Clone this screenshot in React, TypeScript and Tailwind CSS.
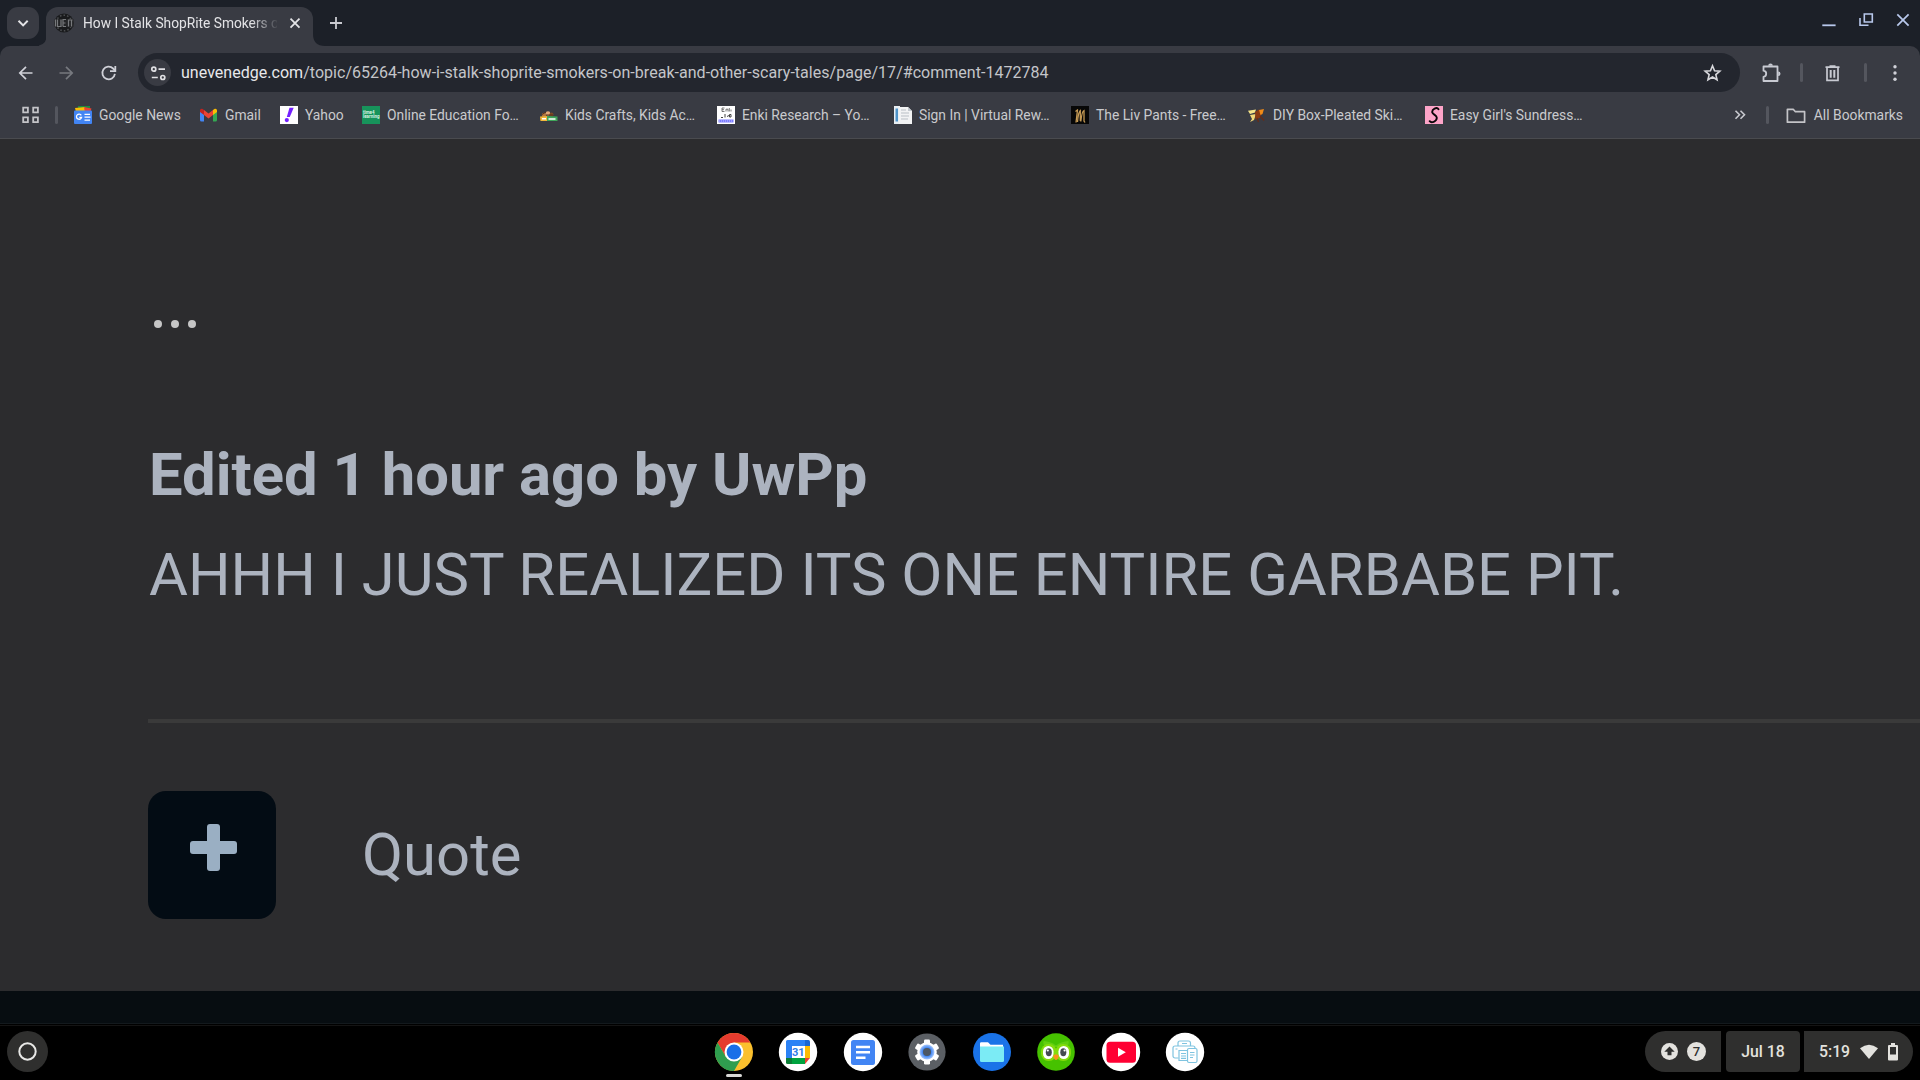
import React from "react";

const FONT = "font-['Roboto','Liberation_Sans',sans-serif]";

function ChevronDown() {
  return (
    <svg className="size-[32px]" viewBox="0 0 32 32" fill="none" stroke="#e3e3e6" strokeWidth="2">
      <path d="M11.5 13.8l4.6 4.6 4.6-4.6" />
    </svg>
  );
}

function TabFavicon() {
  return (
    <svg className="size-[20px] shrink-0" viewBox="0 0 20 20">
      <circle cx="10" cy="10" r="9.6" fill="#191a1c" />
      <circle cx="10" cy="10" r="7.8" fill="none" stroke="#4a4c4f" strokeWidth="1.6" strokeDasharray="1.6 2" />
      <path d="M0.500 6h19v8h-19z" fill="#242527" />
      <path d="M1.500 6.500v7M3.500 6.500v7h3.500v-7M9 13.500v-7h3M9 10h2.500M9 13.500h3M14.500 6.500v7M14 7h4.500M17.500 7v6.500" stroke="#77797c" strokeWidth="1.200" fill="none" />
    </svg>
  );
}

function TabStrip() {
  return (
    <div className="flex h-[46px] w-full bg-[#1c2028] pt-[7px]">
      <div className="ml-[7px] size-[32px] rounded-[11px] bg-[#393b43]">
        <ChevronDown />
      </div>
      <svg className="-mr-px mt-[27px] h-[12px] w-[8px]" viewBox="1 0 8 12">
        <path d="M9 0v12H-3Q9 12 9 0" fill="#393b43" />
      </svg>
      <div className="flex h-[39px] w-[267px] items-start rounded-t-[12px] bg-[#393b43] pl-[8px] pt-[6px]">
        <TabFavicon />
        <div className="ml-[9px] h-[20px] w-[194px] overflow-hidden whitespace-nowrap text-[13.75px] leading-[20px] text-[#e3e3e6] [mask-image:linear-gradient(to_right,black_168px,transparent_196px)]">
          How I Stalk ShopRite Smokers o
        </div>
        <svg className="ml-[8px] size-[20px]" viewBox="0 0 20 20" stroke="#e3e3e6" strokeWidth="1.8">
          <path d="M5.5 5.7l9 9M14.500 5.7l-9 9" />
        </svg>
      </div>
      <svg className="-ml-px mt-[27px] h-[12px] w-[14px]" viewBox="0 0 14 12">
        <path d="M0 0h1Q1 12 13 12H0z" fill="#393b43" />
      </svg>
      <svg className="mt-[6px] size-[20px]" viewBox="0 0 20 20" stroke="#c9cad0" strokeWidth="1.8">
        <path d="M10 4v12M4 10h12" />
      </svg>
      <div className="ml-auto mr-[7px] flex gap-[17px]">
        <svg className="size-[20px]" viewBox="0 0 20 20" fill="none" stroke="#b8c8ec" strokeWidth="1.8">
          <path d="M3.300 18.300h13.300" />
        </svg>
        <svg className="size-[20px]" viewBox="0 0 20 20" fill="none" stroke="#b8c8ec" strokeWidth="1.6">
          <path d="M8.300 7h8v8h-8z M4 11v7.200h8.500" />
        </svg>
        <svg className="size-[20px]" viewBox="0 0 20 20" fill="none" stroke="#b8c8ec" strokeWidth="1.7">
          <path d="M4.300 7.300l11.300 11.300M15.600 7.300L4.300 18.600" />
        </svg>
      </div>
    </div>
  );
}

function Toolbar() {
  return (
    <div className="flex h-[53px] items-center">
      <svg className="ml-[16px] size-[20px]" viewBox="0 0 20 20" fill="none" stroke="#d0d1d8" strokeWidth="1.7">
        <path d="M16.500 10H4M10 3.800L3.800 10l6.200 6.200" />
      </svg>
      <svg className="ml-[20px] size-[20px]" viewBox="0 0 20 20" fill="none" stroke="#77797f" strokeWidth="1.7">
        <path d="M3.500 10H16M10 3.800l6.200 6.200-6.200 6.200" />
      </svg>
      <svg className="ml-[22px] size-[20px]" viewBox="0 0 20 20" fill="none" stroke="#d0d1d8" strokeWidth="1.8">
        <path d="M16.900 10.900A6.300 6.300 0 1 1 15.100 5.500L17 7.400" />
        <path d="M17.300 2.900v5.200h-5.300" />
      </svg>
      <div className="ml-[20px] flex h-[39px] w-[1602px] items-center rounded-full bg-[#23262e] pl-[6px]">
        <div className="flex size-[27px] items-center justify-center rounded-full bg-[#393b43]">
          <svg className="size-[18px]" viewBox="0 0 18 18" fill="none" stroke="#e0e0e4" strokeWidth="1.7">
            <circle cx="4.800" cy="5.200" r="2" />
            <path d="M9.500 5.200h6.500M2.800 13.500h6" />
            <circle cx="13.800" cy="13.500" r="2" />
          </svg>
        </div>
        <div className="ml-[10px] whitespace-nowrap text-[16px] leading-[20px] tracking-[0.03px] text-[#c4c5c9]">
          <span className="text-[#e8e8eb]">unevenedge.com</span>/topic/65264-how-i-stalk-shoprite-smokers-on-break-and-other-scary-tales/page/17/#comment-1472784
        </div>
        <svg className="ml-auto mr-[18px] size-[20px]" viewBox="0 0 20 20" fill="none" stroke="#d8d8dc" strokeWidth="1.600">
          <path d="M10.500 2.800l2.050 4.900 5.300.45-4 3.450 1.200 5.150L10.500 14l-4.550 2.750 1.200-5.150-4-3.450 5.300-.45z" />
        </svg>
      </div>
      <svg className="ml-[20px] size-[22px]" viewBox="0 0 22 22" fill="none" stroke="#c8cad2" strokeWidth="1.800">
        <path d="M3.500 4.500h14v14.500h-14v-4.200c3.600-.4 3.600-5.700 0-6.100z" strokeLinejoin="round" />
        <path d="M8.200 3.800a2.300 2.300 0 0 1 4.600 0zM18.200 9.500a2.300 2.300 0 0 1 0 4.600z" fill="#c8cad2" stroke="none" />
      </svg>
      <div className="ml-[18px] h-[19px] w-[3px] rounded-full bg-[#54565e]" />
      <svg className="ml-[18px] size-[22px]" viewBox="0 0 22 22" fill="none" stroke="#c8cad2" strokeWidth="1.700">
        <path d="M4.500 5.200h14M8.500 4.200h6M6 5.500v12.800h11V5.500" />
        <path d="M9.700 8v7.800M13.300 8v7.800" strokeWidth="2" />
      </svg>
      <div className="ml-[21px] h-[19px] w-[3px] rounded-full bg-[#54565e]" />
      <svg className="ml-[18px] size-[20px]" viewBox="0 0 20 20" fill="#d0d1d8">
        <circle cx="10" cy="3.800" r="1.700" />
        <circle cx="10" cy="10" r="1.700" />
        <circle cx="10" cy="16.200" r="1.700" />
      </svg>
    </div>
  );
}

const ICON = "size-[18px] shrink-0";

const bookmarks: { label: string; width: string; icon: React.ReactNode }[] = [
  {
    label: "Google News",
    width: "w-[126px]",
    icon: (
      <svg className={ICON} viewBox="0 0 18 18">
        <path d="M4 0h12v5H4z" fill="#1e8e3e" />
        <path d="M1 2l10-1 1 5H2z" fill="#fbbc04" />
        <path d="M10 1l7.500 1.500L16 7h-5z" fill="#ea4335" />
        <rect y="4.500" width="18" height="13.500" rx="1" fill="#4285f4" />
        <path d="M7.300 9.300A2.600 2.600 0 1 0 7.600 11.300H5.300M10.500 8.300h5.500M10.500 11.200h6M10.500 14.100h5.500" fill="none" stroke="#fff" strokeWidth="1.300" />
      </svg>
    ),
  },
  {
    label: "Gmail",
    width: "w-[80px]",
    icon: (
      <svg className={ICON} viewBox="0 0 18 18">
        <path d="M0 4.500V14a1.500 1.500 0 0 0 1.500 1.500H4V8z" fill="#4285f4" />
        <path d="M17 4.500V14a1.500 1.500 0 0 1-1.500 1.500H13V8z" fill="#34a853" />
        <path d="M13 4l1.400-1C15.600 2.100 17 3 17 4.400V6l-4 3z" fill="#fbbc04" />
        <path d="M4 9V4l4.500 3.400L13 4v5l-4.500 3.400z" fill="#ea4335" />
        <path d="M0 6V4.400C0 3 1.500 2.100 2.600 3L4 4v5z" fill="#c5221f" />
      </svg>
    ),
  },
  {
    label: "Yahoo",
    width: "w-[82px]",
    icon: (
      <svg className={ICON} viewBox="0 0 18 18">
        <path d="M0 0h18v18H0z" fill="#fff" />
        <path d="M9.500 1.800h4.200L9.800 11H6.800z" fill="#7420ff" />
        <circle cx="6.800" cy="14.100" r="2.100" fill="#7420ff" />
      </svg>
    ),
  },
  {
    label: "Online Education Fo…",
    width: "w-[178px]",
    icon: (
      <div className="flex size-[18px] shrink-0 flex-col justify-center bg-[#17935b] text-[4.500px] font-bold leading-[4px] text-[#d9f2e4]">
        <span className="pl-[1px]">time4</span>
        <span className="pl-[1px]">learning</span>
      </div>
    ),
  },
  {
    label: "Kids Crafts, Kids Ac…",
    width: "w-[177px]",
    icon: (
      <svg className={ICON} viewBox="0 0 18 18">
        <circle cx="4" cy="9" r="2.200" fill="#b5793f" />
        <circle cx="8" cy="7.500" r="2.300" fill="#e3a777" />
        <circle cx="11.500" cy="8.500" r="2" fill="#7b4a25" />
        <path d="M2 8.500l4-2.500M6 9h7" stroke="#5a2f1a" />
        <path d="M0 10.500l8-.5v5H.5z" fill="#f3b63a" />
        <path d="M7 10l10.500.500V15H7z" fill="#3fa65a" />
        <path d="M2 12.800h4M8.500 13h7" stroke="#fff" strokeWidth="1.400" />
      </svg>
    ),
  },
  {
    label: "Enki Research – Yo…",
    width: "w-[177px]",
    icon: (
      <svg className={ICON} viewBox="0 0 18 18">
        <path d="M0 0h18v18H0z" fill="#fff" />
        <path d="M5 2v3.500M5 2h2.500M5 3.700h2M5 5.500h2.500M9 5.500V3.200h2v2.300M12.300 2v3.500M14 3.500v2" stroke="#555" strokeWidth=".8" fill="none" />
        <path d="M4 11.500h2M8 8v3.500M10 10.500l2-1M12.500 8.500v2.500h1.500V8.500z" stroke="#444" strokeWidth="1" fill="none" />
        <path d="M1.500 13.500h15v3h-15z" fill="#7b7bff" />
        <path d="M2 15h14" stroke="#c9c9ff" strokeDasharray="1 1" />
      </svg>
    ),
  },
  {
    label: "Sign In | Virtual Rew…",
    width: "w-[177px]",
    icon: (
      <svg className={ICON} viewBox="0 0 18 18">
        <path d="M0 0h6v18H0z" fill="#e8eef3" />
        <path d="M1.500 2.500h2.500v13H1.500z" fill="#4e93c8" />
        <path d="M5 1h9l4 4v13H5z" fill="#f2f3f4" />
        <path d="M7 4h5M7 7h8M7 10h8M7 13h7" stroke="#b9bfc5" />
        <path d="M14 1v4h4z" fill="#c3c9cf" />
      </svg>
    ),
  },
  {
    label: "The Liv Pants - Free…",
    width: "w-[177px]",
    icon: (
      <svg className={ICON} viewBox="0 0 18 18">
        <path d="M0 0h18v18H0z" fill="#070707" />
        <path d="M5 16.500L6.500 4M6.500 16C7 10 8 5.500 9.300 4.500V15M9.800 15.500C10.500 9 11.500 5 13 4.500V15l1 1.500M4.500 5.500L7 3.500" fill="none" stroke="#c59a55" strokeWidth="1.300" />
      </svg>
    ),
  },
  {
    label: "DIY Box-Pleated Ski…",
    width: "w-[177px]",
    icon: (
      <svg className={ICON} viewBox="0 0 18 18">
        <path d="M0 4.800l8-1.300-1 3L2 8z" fill="#f6e58b" />
        <path d="M2 9l6-1-2 6-4 2 2-3z" fill="#f2d777" />
        <path d="M7 6l4-2.500 3.500 3-3 5.500-4 1.500z" fill="#8a3a12" />
        <path d="M11 4l5-1-1.500 5-2 1z" fill="#ef8a17" />
        <path d="M9 12l1.500 4M12 10l4 4.500" stroke="#6b2a12" strokeWidth="1.200" />
      </svg>
    ),
  },
  {
    label: "Easy Girl's Sundress…",
    width: "w-[177px]",
    icon: (
      <svg className={ICON} viewBox="0 0 18 18">
        <path d="M0 0h18v18H0z" fill="#fda4c8" />
        <path d="M13.500 3.200C12 .8 6.500 3 7.300 6.600c.6 2 4.700 2.500 4.500 5.400-.3 3.800-5.500 5.300-7.100 3.200" fill="none" stroke="#0b0608" strokeWidth="1.900" strokeLinecap="round" />
      </svg>
    ),
  },
];

function BookmarksBar() {
  return (
    <div className="flex h-[39px] items-center pb-[7px] text-[13.85px] leading-[18px] text-[#c9cacd]">
      <svg className="ml-[22px] size-[18px]" viewBox="0 0 18 18" fill="none" stroke="#c4c4c8" strokeWidth="1.800">
        <path d="M1.200 1.700h4.700v4.700H1.200zM11.200 1.700h4.700v4.700h-4.700zM1.200 11.400h4.700v4.700H1.200zM11.200 11.400h4.700v4.700h-4.700z" />
      </svg>
      <div className="ml-[15px] h-[18px] w-[3px] rounded-full bg-[#54565e]" />
      <div className="ml-[16px] flex">
        {bookmarks.map((b) => (
          <div key={b.label} className={`flex items-center gap-[7px] whitespace-nowrap ${b.width}`}>
            {b.icon}
            <span>{b.label}</span>
          </div>
        ))}
      </div>
      <div className="ml-auto flex items-center pr-[17px]">
        <svg className="size-[14px]" viewBox="0 0 14 14" fill="none" stroke="#c9cad0" strokeWidth="1.600">
          <path d="M2.500 2.700L6.500 6.700 2.500 10.700M7.500 2.700l4 4-4 4" />
        </svg>
        <div className="ml-[19px] h-[18px] w-[3px] rounded-full bg-[#54565e]" />
        <svg className="ml-[16px] size-[22px]" viewBox="0 0 22 22" fill="none" stroke="#c4c4c8" strokeWidth="1.700" strokeLinejoin="round">
          <path d="M2.400 18.200V5.300h5.800l2.200 2.400h9.200v10.500z" />
        </svg>
        <span className="ml-[7px]">All Bookmarks</span>
      </div>
    </div>
  );
}

function PageContent() {
  return (
    <main className="flex h-[884px] flex-col bg-[#070d11]">
      <div className="h-[852px] bg-[#2c2c2e] pl-[148px] text-[59.78px] leading-[100px] text-[#acb3bf]">
        <div className="flex gap-[9px] pl-[6px] pt-[181px]">
          <span className="size-[8px] rounded-full bg-[#c6c6c6]" />
          <span className="size-[8px] rounded-full bg-[#c6c6c6]" />
          <span className="size-[8px] rounded-full bg-[#c6c6c6]" />
        </div>
        <h1 className="mt-[97px] pl-px font-bold">Edited 1 hour ago by UwPp</h1>
        <p className="pl-px">AHHH I JUST REALIZED ITS ONE ENTIRE GARBABE PIT.</p>
        <div className="mt-[94px] h-[4px] bg-[#3a3a3a]" />
        <div className="mt-[68px] flex">
          <button className="flex size-[128px] justify-center rounded-[18px] bg-[#030c14] pl-[3px] pt-[33px]">
            <svg className="size-[47px]" viewBox="0 0 47 47" fill="#9aafc3">
              <rect x="17" width="13" height="47" rx="3" />
              <rect y="17" width="47" height="13" rx="3" />
            </svg>
          </button>
          <span className="ml-[86px] mt-[14px]">Quote</span>
        </div>
      </div>
    </main>
  );
}

const apps: React.ReactNode[] = [
  <>
    <circle cx="20" cy="20" r="19" fill="#fbc02d" />
    <path d="M20 10.500H36.500A19 19 0 0 0 3.500 10.500L11.800 24.800z" fill="#e53b2e" />
    <path d="M3.500 10.500A19 19 0 0 0 20 39L28.200 24.800 20 28.500 11.800 24.800z" fill="#2f9e4f" />
    <circle cx="20" cy="20" r="9.500" fill="#fff" />
    <circle cx="20" cy="20" r="7.400" fill="#1a6fe8" />
  </>,
  <>
    <circle cx="20" cy="20" r="19.200" fill="#fff" />
    <path d="M8 9.500A1.500 1.500 0 0 1 9.500 8H27v6H14v12H8z" fill="#2b82f5" />
    <path d="M27 8h3.500A1.500 1.500 0 0 1 32 9.500V14h-5z" fill="#1967d2" />
    <path d="M27 14h5v12h-5z" fill="#fbbc04" />
    <path d="M14 26h13v6H14z" fill="#00a33f" />
    <path d="M8 26h6v6H9.500A1.500 1.500 0 0 1 8 30.500z" fill="#0b7e35" />
    <path d="M27 26h5l-5 6z" fill="#ea4335" />
    <path d="M14 14h13v12H14z" fill="#fff" />
    <text x="20.300" y="24" fontSize="11" fontWeight="700" textAnchor="middle" fill="#2b7de9">31</text>
  </>,
  <>
    <circle cx="20" cy="20" r="19.200" fill="#fff" />
    <rect x="8" y="8" width="24" height="25" rx="2.500" fill="#4285f4" />
    <path d="M13 15h14M13 20.200h14M13 25.700h9.500" stroke="#fff" strokeWidth="2.400" />
  </>,
  <>
    <defs>
      <radialGradient id="gear-glow">
        <stop offset="0.500" stopColor="#2f7bf0" />
        <stop offset="1" stopColor="#a9c8fb" />
      </radialGradient>
    </defs>
    <circle cx="20" cy="20" r="18.600" fill="#5b5f64" />
    <g fill="#fff">
      <circle cx="20" cy="20" r="9.800" />
      <rect x="17" y="7.500" width="6" height="25" rx="1.200" />
      <rect x="17" y="7.500" width="6" height="25" rx="1.200" transform="rotate(60 20 20)" />
      <rect x="17" y="7.500" width="6" height="25" rx="1.200" transform="rotate(120 20 20)" />
    </g>
    <circle cx="20" cy="20" r="7.500" fill="url(#gear-glow)" />
    <circle cx="20" cy="20" r="4" fill="#4c5663" />
  </>,
  <>
    <circle cx="20" cy="20" r="19" fill="#1a73e8" />
    <path d="M8 11.500A1.200 1.200 0 0 1 9.200 10.300H16l2.500 2.500H31V20H8z" fill="#fff" />
    <path d="M8 14.500h24v14a1.500 1.500 0 0 1-1.500 1.500h-21A1.500 1.500 0 0 1 8 28.500z" fill="#7bebf5" />
  </>,
  <>
    <circle cx="20" cy="20" r="18.800" fill="#46c200" />
    <path d="M7.500 9c4 .3 9 1.500 12.500 4.500C23.500 10.500 28.500 9.300 32.500 9c.7 3-.3 5-2.500 6H10C7.800 14 6.800 12 7.500 9z" fill="#62cf10" />
    <rect x="5" y="12" width="15.500" height="17" rx="7.500" fill="#84dc0c" />
    <rect x="19.500" y="12" width="15.500" height="17" rx="7.500" fill="#84dc0c" />
    <rect x="7" y="14" width="10.500" height="13" rx="5.200" fill="#fff" />
    <rect x="22.500" y="14" width="10.500" height="13" rx="5.200" fill="#fff" />
    <ellipse cx="12.800" cy="20.200" rx="3" ry="4" fill="#454a50" />
    <ellipse cx="27.300" cy="20.200" rx="3" ry="4" fill="#454a50" />
    <circle cx="11.800" cy="18.500" r="1.100" fill="#fff" />
    <circle cx="28.600" cy="18.500" r="1.100" fill="#fff" />
    <path d="M17 24q3-3.400 6 0l-1.500 3.200q-1.500 1.500-3 0z" fill="#f7941d" />
  </>,
  <>
    <circle cx="20" cy="20" r="19.200" fill="#fff" />
    <rect x="5.500" y="9.800" width="29.500" height="21" rx="3.500" fill="#ff0033" />
    <path d="M17 15.800v9l7.800-4.500z" fill="#fff" />
  </>,
  <>
    <circle cx="20" cy="20" r="19.200" fill="#fff" />
    <g fill="none" stroke="#7fc4e0" strokeWidth="1.200">
      <path d="M13 14v-3a2 2 0 0 1 2-2h8.500a2 2 0 0 1 2 2v3" />
      <path d="M13.500 26H10a2 2 0 0 1-2-2v-8a2 2 0 0 1 2-2h18a2 2 0 0 1 2 2" />
      <path d="M22 28.500h-8v-10h8M16 21.500h5M16 24h5M16 26.300h5M17 11.500h5M10.500 17h2" />
      <rect x="22.500" y="16.500" width="9.500" height="14" rx="1.500" />
      <path d="M25 20.500h4.500M25 23h4.500M25 25.500h3" />
    </g>
  </>,
];

function Shelf() {
  return (
    <footer className="flex h-[55px] justify-between border-t border-[#141414] bg-black text-[#e3e2de]">
      <div className="flex w-[640px] pl-[7px] pt-[5px]">
        <svg className="size-[41px]" viewBox="0 0 41 41">
          <circle cx="20.500" cy="20.500" r="20.500" fill="#2f2f2e" />
          <circle cx="20.500" cy="20.500" r="8.200" fill="none" stroke="#e8e8e6" strokeWidth="2" />
        </svg>
      </div>
      <div className="flex gap-[24.500px] pr-px pt-[6px]">
        {apps.map((icon, i) => (
          <div key={i} className="flex w-[40px] flex-col items-center">
            <svg className="size-[40px] shrink-0" viewBox="0 0 40 40">{icon}</svg>
            {i === 0 && <span className="mt-[2px] h-[3px] w-[16px] rounded-full bg-[#d8d8d6]" />}
          </div>
        ))}
      </div>
      <div className="flex w-[640px] justify-end pr-[7px] pt-[5px] text-[15.800px] font-medium leading-[41px]">
        <div className="flex h-[41px] w-[76px] items-center rounded-l-full rounded-r-[4px] bg-[#2f2f2e] pl-[16px]">
          <svg className="size-[17px]" viewBox="0 0 17 17">
            <circle cx="8.500" cy="8.500" r="8.500" fill="#e3e2de" />
            <path d="M8.500 3.500l5.200 5.300h-3.200v3.500h-4V8.800H3.300z" fill="#2f2f2e" />
          </svg>
          <span className="ml-[9px] size-[19px] rounded-full bg-[#e3e2de] text-center text-[13px] leading-[19px] text-[#2f2f2e]">7</span>
        </div>
        <div className="ml-[5px] h-[41px] w-[74px] rounded-[4px] bg-[#2f2f2e] text-center">Jul 18</div>
        <div className="ml-[4px] flex h-[41px] w-[109px] items-center rounded-l-[4px] rounded-r-full bg-[#2f2f2e] pl-[15px]">
          <span className="w-[32px] whitespace-nowrap">5:19</span>
          <svg className="ml-[9px] h-[16px] w-[18px]" viewBox="0 0 18 16">
            <path d="M0 4.200Q9-2.800 18 4.200L9 15z" fill="#e3e2de" />
          </svg>
          <svg className="ml-[10px] h-[18px] w-[10px]" viewBox="0 0 10 18">
            <path d="M3 0h4v2h2a1 1 0 0 1 1 1v13.500a1 1 0 0 1-1 1H1a1 1 0 0 1-1-1V3a1 1 0 0 1 1-1h2zM2 4v7.500h6V4z" fill="#e3e2de" fillRule="evenodd" />
          </svg>
        </div>
      </div>
    </footer>
  );
}

export default function App() {
  return (
    <div className={`flex h-[1080px] w-[1920px] flex-col overflow-hidden bg-black ${FONT}`}>
      <TabStrip />
      <div className="bg-[#1c2028]">
        <header className="h-[93px] rounded-t-[10px] border-b border-[#4a4b4f] bg-[#393b43]">
          <Toolbar />
          <BookmarksBar />
        </header>
      </div>
      <PageContent />
      <div className="h-[2px] border-t border-[#13191d] bg-black" />
      <Shelf />
    </div>
  );
}
